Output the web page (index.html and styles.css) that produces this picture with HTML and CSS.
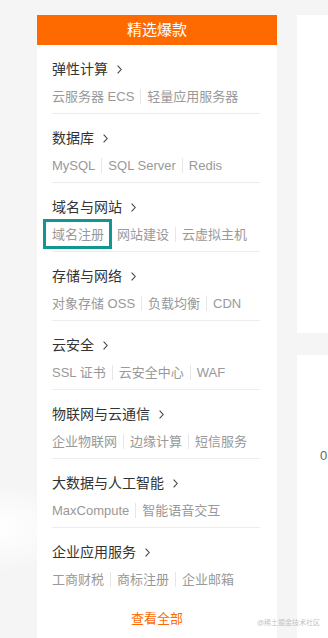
FILE: index.html
```html
<!DOCTYPE html>
<html lang="zh-CN">
<head>
<meta charset="utf-8">
<title>精选爆款</title>
<link rel="stylesheet" href="styles.css">
</head>
<body>
<div class="page">
  <div class="panel">
    <div class="panel-head">精选爆款</div>
    <div class="cats">
      <div class="cat">
        <div class="cat-title">弹性计算<svg class="chev" viewBox="0 0 5 9"><path d="M0.6 0.6 L4.2 4.5 L0.6 8.4"/></svg></div>
        <div class="links"><span>云服务器 ECS</span><span>轻量应用服务器</span></div>
      </div>
      <div class="cat">
        <div class="cat-title">数据库<svg class="chev" viewBox="0 0 5 9"><path d="M0.6 0.6 L4.2 4.5 L0.6 8.4"/></svg></div>
        <div class="links"><span>MySQL</span><span>SQL Server</span><span>Redis</span></div>
      </div>
      <div class="cat">
        <div class="cat-title">域名与网站<svg class="chev" viewBox="0 0 5 9"><path d="M0.6 0.6 L4.2 4.5 L0.6 8.4"/></svg></div>
        <div class="links"><span class="marked">域名注册</span><span>网站建设</span><span>云虚拟主机</span></div>
      </div>
      <div class="cat">
        <div class="cat-title">存储与网络<svg class="chev" viewBox="0 0 5 9"><path d="M0.6 0.6 L4.2 4.5 L0.6 8.4"/></svg></div>
        <div class="links"><span>对象存储 OSS</span><span>负载均衡</span><span>CDN</span></div>
      </div>
      <div class="cat">
        <div class="cat-title">云安全<svg class="chev" viewBox="0 0 5 9"><path d="M0.6 0.6 L4.2 4.5 L0.6 8.4"/></svg></div>
        <div class="links"><span>SSL 证书</span><span>云安全中心</span><span>WAF</span></div>
      </div>
      <div class="cat">
        <div class="cat-title">物联网与云通信<svg class="chev" viewBox="0 0 5 9"><path d="M0.6 0.6 L4.2 4.5 L0.6 8.4"/></svg></div>
        <div class="links"><span>企业物联网</span><span>边缘计算</span><span>短信服务</span></div>
      </div>
      <div class="cat">
        <div class="cat-title">大数据与人工智能<svg class="chev" viewBox="0 0 5 9"><path d="M0.6 0.6 L4.2 4.5 L0.6 8.4"/></svg></div>
        <div class="links"><span>MaxCompute</span><span>智能语音交互</span></div>
      </div>
      <div class="cat last">
        <div class="cat-title">企业应用服务<svg class="chev" viewBox="0 0 5 9"><path d="M0.6 0.6 L4.2 4.5 L0.6 8.4"/></svg></div>
        <div class="links"><span>工商财税</span><span>商标注册</span><span>企业邮箱</span></div>
      </div>
    </div>
    <div class="more">查看全部</div>
  </div>
  <div class="side">
    <div class="side-box top"></div>
    <div class="side-box bottom"><span class="num">0</span></div>
  </div>
</div>
<div class="watermark">@稀土掘金技术社区</div>
</body>
</html>
```
FILE: styles.css
```css
html, body {
  margin: 0;
  padding: 0;
  height: 100%;
  overflow: hidden;
}
body {
  background-color: #f5f5f5;
  background-image: radial-gradient(ellipse 70px 45px at 0 528px, #ffffff 0%, rgba(255,255,255,0.6) 45%, rgba(255,255,255,0) 100%);
  background-repeat: no-repeat;
  font-family: "Liberation Sans", "Noto Sans CJK SC", sans-serif;
  position: relative;
}
.page {
  display: flex;
  gap: 20px;
  padding: 15px 0 0 37px;
  height: 100%;
  box-sizing: border-box;
}
.panel {
  width: 240px;
  flex: none;
  background: #fff;
  display: flex;
  flex-direction: column;
}
.panel-head {
  height: 30px;
  line-height: 30px;
  background: #ff6a00;
  color: #fff;
  font-size: 15px;
  text-align: center;
}
.cats {
  padding: 0 17px 0 15px;
}
.cat {
  padding: 14px 0 6px;
  border-bottom: 1px solid #ececec;
}
.cat.last {
  border-bottom: none;
}
.cat-title {
  display: flex;
  align-items: center;
  height: 20px;
  line-height: 20px;
  font-size: 14px;
  color: #333;
}
.chev {
  width: 5px;
  height: 9px;
  margin-left: 9px;
  fill: none;
  stroke: #444;
  stroke-width: 1.1;
}
.links {
  margin-top: 8px;
  display: flex;
  align-items: center;
  height: 20px;
  line-height: 20px;
  font-size: 13px;
  color: #999;
  white-space: nowrap;
}
.links span + span::before {
  content: "";
  display: inline-block;
  width: 1px;
  height: 15px;
  background: #e6e6e6;
  margin: 0 6px;
  vertical-align: -3px;
}
.marked {
  position: relative;
}
.marked::after {
  content: "";
  position: absolute;
  left: -9px;
  right: -8px;
  top: -6px;
  bottom: -4px;
  border: 3px solid #119690;
}
.more {
  margin-top: 13px;
  text-align: center;
  font-size: 13px;
  line-height: 20px;
  color: #ff6a00;
}
.side {
  flex: 1;
  display: flex;
  flex-direction: column;
  gap: 22px;
}
.side-box {
  background: #fff;
}
.side-box.top {
  height: 318px;
  flex: none;
}
.side-box.bottom {
  flex: 1;
  padding: 91px 0 0 23px;
}
.num {
  display: block;
  font-size: 13px;
  line-height: 20px;
  color: #666;
}
.watermark {
  position: absolute;
  left: 257px;
  top: 618px;
  font-size: 7px;
  line-height: 10px;
  color: #c4c4c4;
  white-space: nowrap;
}
```
